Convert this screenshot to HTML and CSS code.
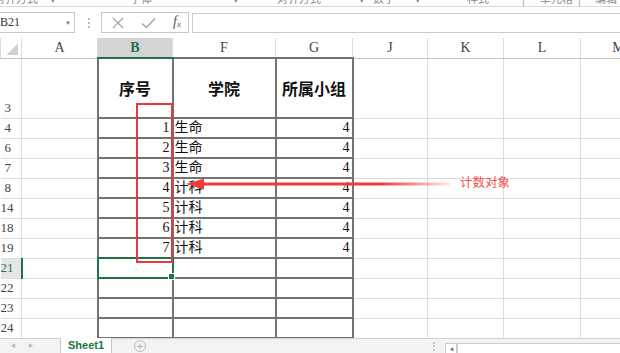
FILE: index.html
```html
<!DOCTYPE html>
<html lang="zh">
<head>
  <meta charset="UTF-8" />
  <title>Sheet1</title>
  <link rel="stylesheet" href="styles.css">
</head>
<body>
  <div class="ribbon">
    <span>对齐方式</span><span>▾</span><span>字体</span><span>▾</span><span>对齐方式</span><span>▾</span><span>数字</span><span>▾</span><span>样式</span><span>|</span><span>单元格</span><span>|</span><span>编辑</span>
  </div>

  <div class="fbar">
    <div class="namebox"><span>B21</span><span class="dd">▼</span></div>
    <div class="grip"></div>
    <div class="fbtns">
      <svg class="ico-x" width="12" height="12" viewBox="0 0 12 12"><path d="M1 1L11 11M11 1L1 11" stroke="#a8a8a8" stroke-width="1.3" fill="none"/></svg>
      <svg class="ico-ok" width="15" height="12" viewBox="0 0 15 12"><path d="M1 6.5L5.5 10.5L14 1.5" stroke="#a8a8a8" stroke-width="1.5" fill="none"/></svg>
      <span class="fx">f<sub>x</sub></span>
    </div>
    <div class="finput"></div>
  </div>

  <div class="grid-wrap">
    <table class="sheet">
      <colgroup>
        <col class="c-rh"><col class="c-a"><col class="c-b"><col class="c-f"><col class="c-g"><col class="c-j"><col class="c-k"><col class="c-l"><col class="c-m">
      </colgroup>
      <thead>
        <tr><th class="corner"></th><th>A</th><th class="sel">B</th><th>F</th><th>G</th><th>J</th><th>K</th><th>L</th><th>M</th></tr>
      </thead>
      <tbody>
        <tr class="tall"><th class="rh">3</th><td></td><td class="t head">序号</td><td class="t head">学院</td><td class="t head">所属小组</td><td></td><td></td><td></td><td></td></tr>
        <tr><th class="rh">4</th><td></td><td class="t num">1</td><td class="t txt">生命</td><td class="t num">4</td><td></td><td></td><td></td><td></td></tr>
        <tr><th class="rh">6</th><td></td><td class="t num">2</td><td class="t txt">生命</td><td class="t num">4</td><td></td><td></td><td></td><td></td></tr>
        <tr><th class="rh">7</th><td></td><td class="t num">3</td><td class="t txt">生命</td><td class="t num">4</td><td></td><td></td><td></td><td></td></tr>
        <tr><th class="rh">8</th><td></td><td class="t num">4</td><td class="t txt">计科</td><td class="t num">4</td><td></td><td></td><td></td><td></td></tr>
        <tr><th class="rh">14</th><td></td><td class="t num">5</td><td class="t txt">计科</td><td class="t num">4</td><td></td><td></td><td></td><td></td></tr>
        <tr><th class="rh">18</th><td></td><td class="t num">6</td><td class="t txt">计科</td><td class="t num">4</td><td></td><td></td><td></td><td></td></tr>
        <tr><th class="rh">19</th><td></td><td class="t num">7</td><td class="t txt">计科</td><td class="t num">4</td><td></td><td></td><td></td><td></td></tr>
        <tr><th class="rh cur-row">21</th><td></td><td class="t cur"></td><td class="t"></td><td class="t"></td><td></td><td></td><td></td><td></td></tr>
        <tr><th class="rh">22</th><td></td><td class="t"></td><td class="t"></td><td class="t"></td><td></td><td></td><td></td><td></td></tr>
        <tr><th class="rh">23</th><td></td><td class="t"></td><td class="t"></td><td class="t"></td><td></td><td></td><td></td><td></td></tr>
        <tr><th class="rh">24</th><td></td><td class="t"></td><td class="t"></td><td class="t"></td><td></td><td></td><td></td><td></td></tr>
      </tbody>
    </table>
  </div>

  <div class="tabs">
    <div class="nav"><span>◀</span><span>▶</span></div>
    <div class="tab">Sheet1</div>
    <div class="add">+</div>
    <div class="spacer"></div>
    <div class="grip2"></div>
    <div class="sbtn">◀</div>
    <div class="sbar"></div>
  </div>

  <!-- annotation drawn on top of the sheet -->
  <div class="mark"></div>
  <svg class="arrow" width="280" height="16" viewBox="0 0 280 16">
    <defs>
      <linearGradient id="fade" x1="0" x2="1" y1="0" y2="0">
        <stop offset="0.72" stop-color="#f03a3a"/>
        <stop offset="1" stop-color="#f03a3a" stop-opacity="0.1"/>
      </linearGradient>
    </defs>
    <rect x="20" y="6.5" width="250" height="3" fill="url(#fade)"/>
    <polygon points="6,8 24,2.5 24,13.5" fill="#f03a3a"/>
  </svg>
  <div class="note">计数对象</div>
</body>
</html>
```

FILE: styles.css
```css
* {
  box-sizing: border-box;
}
body {
  margin: 0;
  width: 620px;
  height: 353px;
  overflow: hidden;
  background: #fff;
  font-family: "Liberation Serif", "Noto Sans CJK SC", serif;
  display: flex;
  flex-direction: column;
  position: relative;
}

/* ribbon remnant at the very top */
.ribbon {
  flex: none;
  height: 7px;
  overflow: hidden;
  border-bottom: 1px solid #d8d8d8;
  display: grid;
  grid-template-columns: 50px 80px 103px 44px 82px 14px 42px 52px 55px 18px 38px 17px 1fr;
  font: 11px/11px "Noto Sans CJK SC", sans-serif;
  color: #8a8a8a;
}
.ribbon span {
  margin-top: -7px;
  white-space: nowrap;
}
.ribbon span:first-child {
  margin-left: -6px;
}

/* formula bar */
.fbar {
  flex: none;
  height: 31px;
  display: flex;
  align-items: flex-start;
  padding-top: 5px;
}
.namebox {
  margin-left: -6px;
  width: 81px;
  height: 21px;
  border: 1px solid #c8c8c8;
  display: flex;
  align-items: center;
  justify-content: space-between;
  padding: 0 3px 0 5px;
  font-size: 12px;
  color: #333;
}
.namebox .dd {
  font-size: 6px;
  color: #777;
}
.grip {
  margin: 6px 0 0 13px;
  width: 2px;
  height: 10px;
  border-left: 2px dotted #bdbdbd;
}
.fbtns {
  margin-left: 11px;
  width: 88px;
  height: 21px;
  border: 1px solid #c8c8c8;
  display: flex;
  align-items: center;
}
.ico-x {
  margin-left: 10px;
}
.ico-ok {
  margin-left: 17px;
}
.fx {
  margin-left: 17px;
  font-style: italic;
  font-size: 14px;
  color: #555;
  line-height: 14px;
}
.fx sub {
  font-size: 9px;
  vertical-align: -1px;
}
.finput {
  margin-left: 3px;
  margin-top: 1px;
  flex: 1;
  height: 20px;
  border: 1px solid #cdcdcd;
  border-right: none;
}

/* the sheet grid */
.grid-wrap {
  flex: 1;
  overflow: hidden;
}
.sheet {
  border-collapse: collapse;
  table-layout: fixed;
  width: 656px;
}
.c-rh { width: 21px; }
.c-a { width: 76px; }
.c-b { width: 75px; }
.c-f { width: 103px; }
.c-g { width: 77px; }
.c-j { width: 75px; }
.c-k { width: 76px; }
.c-l { width: 77px; }
.c-m { width: 76px; }

.sheet th,
.sheet td {
  padding: 0;
  height: 20px;
  border: 1px solid #dcdcdc;
  white-space: nowrap;
  font-size: 14px;
  color: #111;
}
.sheet thead th {
  font-weight: normal;
  color: #444;
  border-bottom-color: #c4c4c4;
  border-top: none;
}
.sheet thead th.sel {
  background: #d4d4d4;
  color: #217346;
  font-weight: bold;
  border-bottom: 2px solid #217346;
}
.sheet th.corner {
  background: linear-gradient(to top left, #d0d0d0 50%, transparent 50%) no-repeat right 3px bottom 3px / 12px 12px;
}
.sheet th.rh {
  font-weight: normal;
  font-size: 13px;
  color: #444;
  text-align: right;
  padding-right: 10px;
  border-left: none;
}
.sheet tr.tall th,
.sheet tr.tall td {
  height: 60px;
}
.sheet tr.tall th.rh {
  vertical-align: bottom;
  padding-bottom: 2px;
}
.sheet th.cur-row {
  color: #217346;
  background: #e6e6e6;
  border-right: 2px solid #217346;
}
.sheet td.t {
  border: 2px solid #737373;
}
.sheet td.head {
  text-align: center;
  font-weight: bold;
  font-size: 16px;
  font-family: "Noto Sans CJK SC", sans-serif;
}
.sheet td.num {
  text-align: right;
  padding-right: 2px;
  vertical-align: bottom;
  line-height: 18px;
}
.sheet td.txt {
  padding-left: 1px;
  vertical-align: bottom;
  line-height: 18px;
}
.sheet td.cur {
  position: relative;
  outline: 2px solid #217346;
  outline-offset: -1px;
}
.sheet td.cur::after {
  content: "";
  position: absolute;
  right: -3px;
  bottom: -3px;
  width: 5px;
  height: 5px;
  background: #217346;
  border: 1px solid #fff;
}

/* sheet tabs */
.tabs {
  flex: none;
  height: 15px;
  display: flex;
  background: #f3f3f3;
  border-top: 1px solid #d2d2d2;
  font-family: "Liberation Sans", sans-serif;
}
.nav {
  width: 48px;
  display: flex;
  align-items: center;
  gap: 12px;
  padding-left: 10px;
  color: #bcbcbc;
  font-size: 6px;
}
.tab {
  margin-left: 12px;
  margin-top: -1px;
  width: 52px;
  background: #fff;
  border-left: 1px solid #c8c8c8;
  border-right: 1px solid #c8c8c8;
  color: #217346;
  font: bold 11px/15px "Liberation Sans", sans-serif;
  text-align: center;
}
.add {
  margin-left: 22px;
  align-self: center;
  width: 12px;
  height: 12px;
  border: 1px solid #b8b8b8;
  border-radius: 50%;
  color: #aaa;
  font-size: 11px;
  line-height: 10px;
  text-align: center;
}
.spacer {
  flex: 1;
}
.grip2 {
  align-self: center;
  width: 2px;
  height: 9px;
  border-left: 2px dotted #c4c4c4;
  margin-right: 10px;
}
.sbtn {
  margin-top: 4px;
  width: 12px;
  border: 1px solid #cacaca;
  border-bottom: none;
  background: #fff;
  color: #666;
  font-size: 5px;
  line-height: 10px;
  text-align: center;
}
.sbar {
  margin-top: 4px;
  width: 163px;
  border: 1px solid #cacaca;
  border-right: none;
  border-bottom: none;
  background: #fff;
}

/* red annotation */
.mark {
  position: absolute;
  left: 136px;
  top: 103px;
  width: 37px;
  height: 160px;
  border: 2px solid #e8393c;
}
.arrow {
  position: absolute;
  left: 180px;
  top: 176px;
}
.note {
  position: absolute;
  left: 460px;
  top: 174px;
  font: 12.5px/16px "Noto Sans CJK SC", sans-serif;
  color: #f25050;
}
```
